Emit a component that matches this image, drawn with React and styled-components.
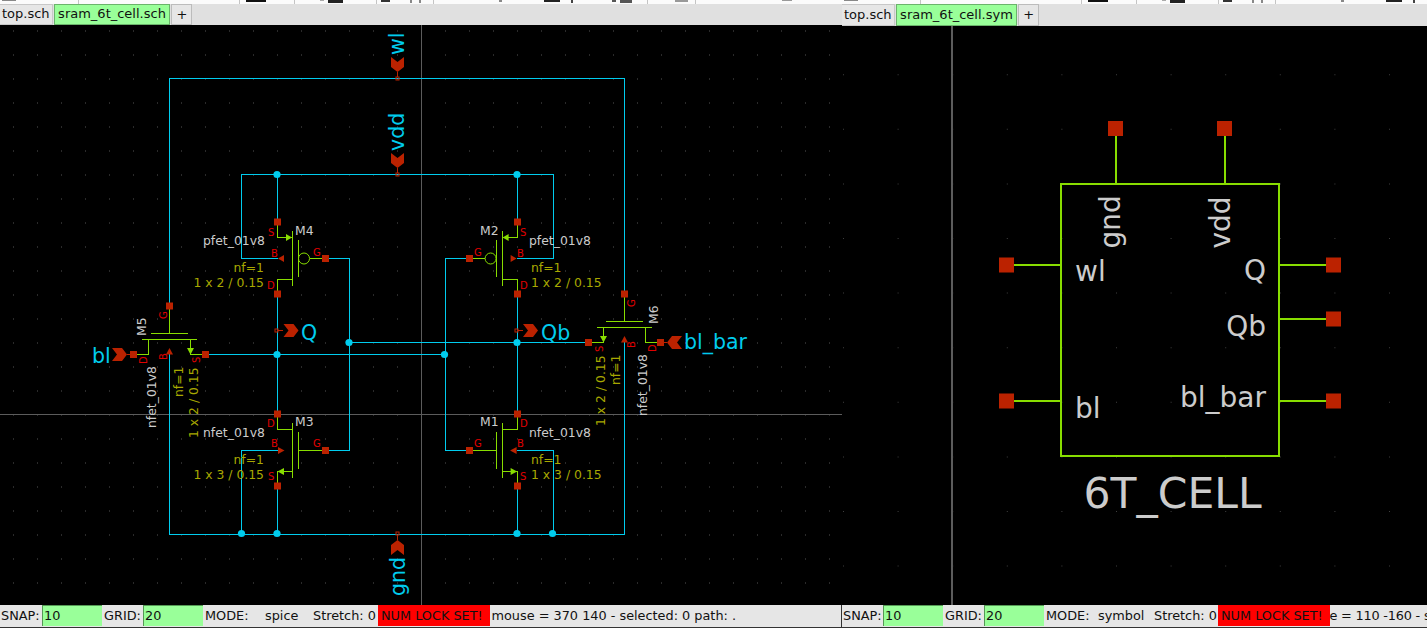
import React from 'react';
import styled, { createGlobalStyle } from 'styled-components';

const Global = createGlobalStyle`
  html, body { margin: 0; padding: 0; background: #e0e0e0; overflow: hidden; }
  #root { width: 1427px; height: 628px; }
`;
const Desk = styled.div`
  display: grid; grid-template-columns: 842px 585px; width: 1427px; height: 628px;
  font-family: "DejaVu Sans", sans-serif; font-size: 13px; color: #111;
`;
const Pane = styled.section`
  display: grid; grid-template-rows: 4px ${p => p.$tabs}px 1fr 23px; min-width: 0; height: 628px; overflow: hidden;
`;
const Tools = styled.svg`display: block; width: 100%; height: 4px; background: #fbfbfb;`;
const Tabs = styled.div`display: flex; background: #e0e0e0; align-items: stretch; gap: 1px;`;
const Tab = styled.div`
  display: flex; align-items: center; padding: 0 3.5px 2px; box-sizing: border-box; white-space: nowrap;
  background: #99ff99; border: 1px solid #6bb36b;
`;
const PlainTab = styled(Tab)`
  background: #e6e6e6; border: 1px solid #c8c8c8; border-left-width: 0; padding: 0 2px 2px;
`;
const Plus = styled(Tab)`background: #e6e6e6; padding: 0 4px 1px; border-color: #bcbcbc;`;
const Canvas = styled.svg`
  display: block; background: #000; width: 100%; height: 100%;
  font-family: "DejaVu Sans", sans-serif;
`;
const Status = styled.footer`
  display: flex; align-items: flex-start; background: #e6e6e6; border-bottom: 1px solid #333; white-space: nowrap;
  border-right: ${p => (p.$edge ? '1px solid #333' : '0')};
  overflow: hidden; box-sizing: border-box; height: 23px; padding-left: 1px;
  font-size: 12.85px; line-height: 21px;
`;
const Caption = styled.span`
  flex: none; box-sizing: border-box; width: ${p => p.$w}px; padding-left: ${p => p.$pad || 0}px;
`;
const Entry = styled.span`
  flex: none; width: 60px; height: 21px; box-sizing: border-box; background: #99ff99;
  border-left: 1px solid #559955; border-top: 1px solid #559955; padding-left: 1px; line-height: 19px;
`;
const Alarm = styled.span`
  flex: none; box-sizing: border-box; background: #ff0000; width: 111.5px; height: 21px; padding-left: 3px;
`;
const Mouse = styled.span`flex: none; padding-left: ${p => p.$pad}px; letter-spacing: ${p => p.$track}px;`;

const CY = '#00ccee', GR = '#88dd00', PN = '#bb2200';

const Wires = ({ d, c = CY, w = 1 }) => <path d={d} fill="none" stroke={c} strokeWidth={w} shapeRendering="crispEdges" />;
const Pin = ({ x, y, s = 7 }) => <rect x={x - s / 2} y={y - s / 2} width={s} height={s} fill={PN} />;
const Dot = ({ x, y }) => <circle cx={x} cy={y} r={3.6} fill={CY} />;
const Tri = ({ p, c = PN }) => <polygon points={p} fill={c} />;
const T = ({ x, y, c = '#cccccc', s = 12.4, rot, a, children }) => (
  <text x={x} y={y} fill={c} fontSize={s} textAnchor={a} transform={rot ? `rotate(-90 ${x} ${y})` : undefined}>{children}</text>
);
const OL = '#a8a800', RD = '#e00000';

const Y0 = 25;

const Mos = ({ flip, p, ty }) => {
  const X = v => (flip ? 794.6 - v : v);
  const g = ty;
  if (p) {
    return (
      <>
        <Wires c={GR} d={`M${X(277.5)} ${g - 36}V${g - 20.5}H${X(292.5)}M${X(292.5)} ${g - 27}V${g + 28}M${X(292.5)} ${g + 21.5}H${X(277.5)}V${g + 36}M${X(298.5)} ${g - 18}V${g + 19}M${X(310)} ${g + 0.5}H${X(325)}`} />
        <circle cx={X(304)} cy={g + 0.5} r={5.5} fill="none" stroke={GR} />
        <Tri c={GR} p={`${X(292)},${g - 20.5} ${X(286)},${g - 24} ${X(286)},${g - 17}`} />
        <Tri p={`${X(278)},${g + 0.5} ${X(284)},${g - 3} ${X(284)},${g + 4}`} />
      </>
    );
  }
  return (
    <>
      <Wires c={GR} d={`M${X(277.5)} ${g - 36}V${g - 20.5}H${X(292.5)}M${X(292.5)} ${g - 27}V${g + 28}M${X(292.5)} ${g + 21.5}H${X(277.5)}V${g + 36}M${X(298.5)} ${g - 18}V${g + 19}M${X(298.5)} ${g + 0.5}H${X(325)}`} />
      <Tri c={GR} p={`${X(277.5)},${g + 21.5} ${X(284)},${g + 18} ${X(284)},${g + 25}`} />
      <Tri p={`${X(284.5)},${g + 0.5} ${X(278)},${g - 3} ${X(278)},${g + 4}`} />
    </>
  );
};

const Pass = ({ gx, gy, sx, dx }) => {
  const y = gy + 27.5;
  const ch = y + 6;
  const leg = ch + 15;
  return (
    <>
      <Wires c={GR} d={`M${gx} ${gy}V${y}M${gx - 18.5} ${y}H${gx + 18.5}M${gx - 27.5} ${ch}H${gx + 27.5}M${sx} ${ch}V${leg}M${dx} ${ch}V${leg}`} />
      <Tri c={GR} p={`${sx},${leg} ${sx - 3.5},${leg - 6.5} ${sx + 3.5},${leg - 6.5}`} />
      <Tri p={`${gx},${leg - 6.5} ${gx - 3.5},${leg} ${gx + 3.5},${leg}`} />
    </>
  );
};

const InDown = ({ x, y }) => (
  <>
    <Tri p={`${x - 6.5},${y} ${x},${y + 5} ${x + 6.5},${y} ${x + 6.5},${y + 10} ${x},${y + 15} ${x - 6.5},${y + 10}`} />
    <Wires c={PN} d={`M${x} ${y + 15}V${y + 20}`} />
    <rect x={x - 1.5} y={y + 20} width={3} height={3} fill="none" stroke={PN} strokeWidth={1} />
  </>
);

const Horizontal = ({ x, y, dir }) => {
  const P = v => x + dir * v;
  return <Tri p={`${P(0)},${y - 6.5} ${P(10)},${y - 6.5} ${P(15)},${y} ${P(10)},${y + 6.5} ${P(0)},${y + 6.5} ${P(5)},${y}`} />;
};

const dots = (x0, x1, y0, y1, step) => {
  let d = '';
  for (let x = x0; x < x1; x += step) for (let y = y0; y < y1; y += step) d += `M${x.toFixed(1)} ${y.toFixed(1)}h1v1h-1z`;
  return d;
};

/* bottom slivers of the toolbar icons, cut by the window edge */
const SLIVERS = [
  [2, 14, 1, '#888'], [78, 1, 4, '#c4c4c4'], [239, 1, 4, '#c4c4c4'], [246, 20, 2, '#111'], [294, 1, 4, '#c4c4c4'],
  [320, 4, 1, '#aaa'], [328, 15, 3, '#222'], [376, 1, 4, '#c4c4c4'], [381, 9, 2, '#333'], [410, 2, 3, '#888'], [419, 2, 3, '#888'],
  [433, 1, 4, '#c4c4c4'], [499, 3, 2, '#888'], [544, 16, 2, '#222'], [571, 2, 3, '#444'], [612, 4, 2, '#555'], [620, 12, 3, '#555'], [647, 1, 4, '#c4c4c4'],
  [675, 13, 2, '#999'], [695, 1, 4, '#c4c4c4'], [782, 10, 1, '#999'],
];

const ToolStrip = ({ width }) => (
  <Tools viewBox={`0 0 ${width} 4`} preserveAspectRatio="xMinYMin slice">
    {SLIVERS.filter(s => s[0] < width).map(([x, w, h, c]) => <rect key={x} x={x} y={0} width={w} height={h} fill={c} />)}
  </Tools>
);

const Schematic = () => (
  <Canvas viewBox={`0 ${Y0} 842 580`} preserveAspectRatio="xMinYMin slice">
    <path d={dots(13, 842, 30.5, 605, 24)} fill="#555" />
    <Wires c="#5c5c5c" d="M421.5 25V605M0 414.5H842" />
    <Wires d="M169.5 306V78.5H624.5V294M169.5 354V534.5H624.5V342M241.5 258.5V174.5H553.5V258.5M241.5 258.5H278M553.5 258.5H517M241.5 534V450.5H278M553.5 534V450.5H517M277.5 174V222M517.5 174V222M277.5 294V414M517.5 294V414M277.5 486V534M517.5 486V534M325 258.5H349.5V450.5H325M469 258.5H445.5V450.5H469M349 342.5H588M205 354.5H445" />
    <Mos p ty={258} />
    <Mos p flip ty={258} />
    <Mos ty={450} />
    <Mos flip ty={450} />
    <Pass gx={169.5} gy={306} sx={190.5} dx={148.5} />
    <Pass gx={624.5} gy={294} sx={603.5} dx={645.5} />
    <Wires c={GR} d="M190.5 354.5H205M148.5 354.5H133M603.5 342.5H588M645.5 342.5H660" />
    {[[277.5, 222], [517.5, 222], [277.5, 294], [517.5, 294], [277.5, 414], [517.5, 414], [277.5, 486], [517.5, 486], [325.5, 258.5], [469.5, 258.5], [325.5, 450.5], [469.5, 450.5], [169.5, 306], [624.5, 294], [133.5, 354.5], [205.5, 354.5], [588.5, 342.5], [660.5, 342.5]].map(([x, y]) => <Pin key={`${x}-${y}`} x={x} y={y} />)}
    {[[277, 174.5], [517, 174.5], [277, 354.5], [517, 342.5], [349, 342.5], [444.5, 354.5], [241.5, 533.5], [277, 533.5], [517, 533.5], [552.5, 533.5]].map(([x, y]) => <Dot key={`${x}-${y}`} x={x} y={y} />)}

    <InDown x={397.5} y={57} />
    <InDown x={397.5} y={153} />
    <Tri p="391,545 397.5,540 404,545 404,555 397.5,550 391,555" />
    <Wires c={PN} d="M397.5 535V540" />
    <rect x={396} y={532} width={3} height={3} fill="none" stroke={PN} />
    <Wires c={PN} d="M277 330.5H283M523 330.5H517" />
    <rect x={275} y={329} width={3} height={3} fill="none" stroke={PN} />
    <rect x={515} y={329} width={3} height={3} fill="none" stroke={PN} />
    <Horizontal x={283.5} y={330.5} dir={1} />
    <Horizontal x={523} y={330.5} dir={1} />
    <Horizontal x={112} y={354.5} dir={1} />
    <Horizontal x={682} y={342.5} dir={-1} />
    <Wires c={PN} d="M127 354.5H133M667 342.5H660" />

    <T x={404} y={55} c={CY} s={20.5} rot>wl</T>
    <T x={404} y={151} c={CY} s={20.5} rot>vdd</T>
    <T x={405} y={596} c={CY} s={20.5} rot>gnd</T>
    <T x={301} y={340} c={CY} s={20.5}>Q</T>
    <T x={541} y={340} c={CY} s={20.5}>Qb</T>
    <T x={92} y={363} c={CY} s={20.5}>bl</T>
    <T x={684} y={349} c={CY} s={20.5}>bl_bar</T>

    <T x={295} y={235}>M4</T><T x={203} y={245}>pfet_01v8</T>
    <T x={264} y={272} c={OL} a="end">nf=1</T><T x={264} y={287} c={OL} a="end">1 x 2 / 0.15</T>
    <T x={480} y={235}>M2</T><T x={529} y={245}>pfet_01v8</T>
    <T x={531} y={272} c={OL}>nf=1</T><T x={531} y={287} c={OL}>1 x 2 / 0.15</T>
    <T x={295} y={426}>M3</T><T x={203} y={437}>nfet_01v8</T>
    <T x={264} y={464} c={OL} a="end">nf=1</T><T x={264} y={479} c={OL} a="end">1 x 3 / 0.15</T>
    <T x={480} y={426}>M1</T><T x={529} y={437}>nfet_01v8</T>
    <T x={531} y={464} c={OL}>nf=1</T><T x={531} y={479} c={OL}>1 x 3 / 0.15</T>

    <T x={145.5} y={336} rot>M5</T>
    <T x={155.5} y={428} rot>nfet_01v8</T>
    <T x={182.5} y={397} c={OL} rot>nf=1</T>
    <T x={197.5} y={438} c={OL} rot>1 x 2 / 0.15</T>
    <T x={657.5} y={324} rot>M6</T>
    <T x={646.5} y={416} rot>nfet_01v8</T>
    <T x={620} y={385} c={OL} rot>nf=1</T>
    <T x={605} y={426} c={OL} rot>1 x 2 / 0.15</T>

    {[[268, 236, 'S'], [271, 257, 'B'], [313, 256, 'G'], [267, 289, 'D'], [267, 427, 'D'], [271, 447, 'B'], [313, 447, 'G'], [268, 480, 'S'], [520, 236, 'S'], [517, 257, 'B'], [474, 256, 'G'], [520, 289, 'D'], [520, 427, 'D'], [517, 447, 'B'], [474, 447, 'G'], [520, 480, 'S']].map(([x, y, l]) => (
      <T key={`${x}-${y}`} x={x} y={y} c={RD} s={10}>{l}</T>
    ))}
    {[[167, 319, 'G'], [147, 364, 'D'], [167, 360, 'B'], [200, 363, 'S'], [635, 307, 'G'], [602.5, 352, 'S'], [635, 348, 'B'], [656, 352, 'D']].map(([x, y, l]) => (
      <T key={`${x}-${y}`} x={x} y={y} c={RD} s={10} rot>{l}</T>
    ))}
  </Canvas>
);

const SymbolView = () => (
  <Canvas viewBox="842 26 585 579" preserveAspectRatio="xMinYMin slice">
    <path d={dots(843, 1427, 19.6, 605, 54.6)} fill="#3f3f3f" />
    <Wires c="#5c5c5c" w={2} d="M952 25V605" />
    <Wires c={GR} w={2} d="M1061 183.5H1279V456H1061ZM1115.5 128V183M1225 128V183M1006 265H1061M1279 265H1334M1279 319H1334M1006 401H1061M1279 401H1334" />
    {[[1115.5, 128.5], [1224.5, 128.5], [1006.5, 265], [1333.5, 265], [1333.5, 319], [1006.5, 401], [1333.5, 401]].map(([x, y]) => <Pin key={`${x}-${y}`} x={x} y={y} s={15} />)}
    <T x={1075} y={281} s={28}>wl</T>
    <T x={1075} y={418} s={28}>bl</T>
    <T x={1266} y={280} s={28} a="end">Q</T>
    <T x={1266} y={336} s={28} a="end">Qb</T>
    <T x={1266} y={407} s={28} a="end">bl_bar</T>
    <T x={1120} y={248.5} s={28} rot>gnd</T>
    <T x={1229.5} y={248.5} s={28} rot>vdd</T>
    <T x={1083.5} y={508} s={42.5}>6T_CELL</T>
  </Canvas>
);

const Window = ({ view, file, mode, tabs, edge, strip, snapW, modeW, modeGap, stretchW, mouse, mousePad, track }) => (
  <Pane $tabs={tabs}>
    <ToolStrip width={strip} />
    <Tabs>
      <PlainTab>top.sch</PlainTab>
      <Tab>{file}</Tab>
      <Plus>+</Plus>
    </Tabs>
    {view}
    <Status $edge={edge}>
      <Caption $w={snapW}>SNAP:</Caption>
      <Entry>10</Entry>
      <Caption $w={41} $pad={2}>GRID:</Caption>
      <Entry>20</Entry>
      <Caption $w={modeW} $pad={2}>MODE:</Caption>
      <Caption $w={modeGap}>{mode}</Caption>
      <Caption $w={stretchW}>Stretch: 0</Caption>
      <Alarm>NUM LOCK SET!</Alarm>
      <Mouse $pad={mousePad} $track={track}>{mouse}</Mouse>
    </Status>
  </Pane>
);

export default function App() {
  return (
    <>
      <Global />
      <Desk>
        <Window view={<Schematic />} file="sram_6t_cell.sch" mode="spice" tabs={21} edge strip={842}
          snapW={41} modeW={62} modeGap={48} stretchW={65}
          mouse="mouse = 370 140 - selected: 0 path: ." mousePad={2} track={0} />
        <Window view={<SymbolView />} file="sram_6t_cell.sym" mode="symbol" tabs={22} strip={585}
          snapW={40} modeW={54} modeGap={56} stretchW={64}
          mouse="e = 110 -160 - s" mousePad={0} track={-0.2} />
      </Desk>
    </>
  );
}
